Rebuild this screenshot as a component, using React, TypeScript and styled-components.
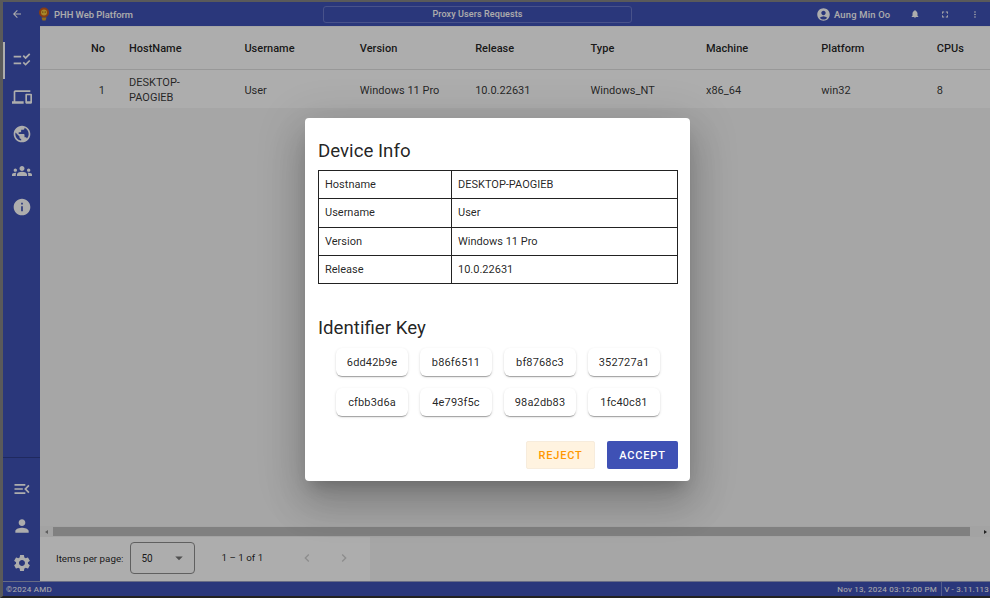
import styled, { createGlobalStyle } from "styled-components";
import {
  MdAccountCircle,
  MdArrowBack,
  MdArrowDropDown,
  MdChecklistRtl,
  MdChevronLeft,
  MdChevronRight,
  MdFullscreen,
  MdGroups,
  MdInfo,
  MdMenuOpen,
  MdMoreVert,
  MdNotifications,
  MdOutlineDevices,
  MdPerson,
  MdPublic,
  MdSettings,
} from "react-icons/md";

const GlobalStyle = createGlobalStyle`
  html, body {
    margin: 0;
    padding: 0;
    background: #fff;
  }
  * {
    box-sizing: border-box;
  }
  body {
    font-family: Roboto, "Liberation Sans", sans-serif;
  }
`;

const Frame = styled.div`
  position: relative;
  width: 990px;
  height: 598px;
  overflow: hidden;
  display: flex;
  flex-direction: column;
  background: #fff;
  border-top: 2px solid #5a5a5a;
  border-bottom: 2px solid #222;
  border-left: 3px solid #5a5a5a;
`;

const Header = styled.header`
  height: 24px;
  flex: none;
  background: #3f51b5;
  color: #fff;
  display: grid;
  grid-template-columns: 320px 309px 1fr;
  align-items: center;
`;

const HeaderLeft = styled.div`
  display: flex;
  align-items: center;
  font-size: 9.4px;
  font-weight: 500;

  svg {
    flex: none;
  }
`;

const BackIcon = styled(MdArrowBack)`
  font-size: 12px;
  margin: 0 15px 0 8px;
`;

const Logo = styled.svg`
  width: 12px;
  height: 14px;
  margin-right: 4px;
`;

const TitleBox = styled.div`
  height: 17px;
  border: 1px solid #6a79cc;
  border-radius: 3px;
  display: flex;
  align-items: center;
  justify-content: center;
  font-size: 9px;
  font-weight: 500;
  letter-spacing: 0.1px;
`;

const HeaderRight = styled.div`
  display: flex;
  align-items: center;
  justify-content: flex-end;
  font-weight: 500;
`;

const UserName = styled.span`
  margin: 0 20px 0 3px;
  width: 56px;
  white-space: nowrap;
  font-size: 9.4px;
  letter-spacing: 0.2px;
`;

const HeaderButton = styled.span`
  width: 10px;
  display: flex;
  justify-content: center;
  font-size: 14px;
  margin-right: 20px;

  &:last-child {
    margin-right: 10px;
  }
`;

const Body = styled.div`
  flex: 1;
  min-height: 0;
  display: flex;
`;

const Sidebar = styled.nav`
  width: 37px;
  flex: none;
  background: #3f51b5;
  display: flex;
  flex-direction: column;
  padding-top: 16px;
`;

const NavGroup = styled.div`
  display: flex;
  flex-direction: column;
`;

const BottomGroup = styled(NavGroup)`
  margin-top: auto;
  border-top: 1px solid #2f3d8c;
  padding-top: 13px;
`;

const NavItem = styled.div<{ $active?: boolean }>`
  height: 36.75px;
  display: flex;
  align-items: center;
  justify-content: center;
  color: #fff;
  font-size: 20px;
  border-left: 2px solid ${(p) => (p.$active ? "#fff" : "transparent")};
  padding-right: 2px;
`;

const Main = styled.main`
  flex: 1;
  min-width: 0;
  display: flex;
  flex-direction: column;
  background: #f5f5f5;
`;

const TableArea = styled.div`
  flex: 1;
  min-height: 0;
  padding-top: 1px;
`;

const Row = styled.div<{ $head?: boolean }>`
  display: grid;
  grid-template-columns: 65px repeat(8, 115.4px);
  align-items: center;
  height: ${(p) => (p.$head ? "43px" : "38px")};
  padding-top: ${(p) => (p.$head ? "0" : "2px")};
  background: #fff;
  border-bottom: ${(p) => (p.$head ? "1px solid #e0e0e0" : "none")};
  color: rgba(0, 0, 0, ${(p) => (p.$head ? 0.87 : 0.8)});
  font-size: 11px;
  font-weight: ${(p) => (p.$head ? 500 : 400)};
  line-height: 15px;
`;

const NumberCell = styled.div`
  text-align: right;
`;

const Cell = styled.div`
  padding-left: 24px;
  white-space: nowrap;
`;

const WrapCell = styled(Cell)`
  white-space: normal;
  padding-right: 30px;
`;

const Scrollbar = styled.div`
  height: 11px;
  flex: none;
  background: #f1f1f1;
  display: flex;
  align-items: center;
  justify-content: space-between;
  padding: 0 3px 0 5px;
`;

const ScrollThumb = styled.div`
  flex: 1;
  height: 9px;
  background: #bdbdbd;
  margin: 0 14px 0 5px;
`;

const ScrollArrow = styled.span<{ $right?: boolean }>`
  width: 0;
  height: 0;
  border-top: 2.5px solid transparent;
  border-bottom: 2.5px solid transparent;
  border-${(p) => (p.$right ? "left" : "right")}: 3px solid ${(p) => (p.$right ? "#333" : "#8a8a8a")};
`;

const Paginator = styled.div`
  height: 44px;
  flex: none;
  width: 330px;
  background: #fff;
  display: flex;
  align-items: center;
  padding: 0 0 2px 16px;
  color: rgba(0, 0, 0, 0.87);
  font-size: 9.8px;
`;

const PageSize = styled.div`
  width: 65px;
  height: 32px;
  border: 1px solid #8e8e8e;
  border-radius: 4px;
  margin-left: 6px;
  display: flex;
  align-items: center;
  justify-content: space-between;
  padding: 0 6px 0 11px;
  font-size: 10px;

  svg {
    font-size: 18px;
    color: #757575;
  }
`;

const RangeLabel = styled.span`
  margin-left: 27px;
  font-size: 9.8px;
  margin-bottom: 2px;
`;

const PageButton = styled.span`
  display: flex;
  color: #cfcfcf;
  font-size: 16px;
  margin-left: 21px;
`;

const FirstPageButton = styled(PageButton)`
  margin-left: 36px;
`;

const Footer = styled.footer`
  height: 15px;
  flex: none;
  background: #3f51b5;
  border-top: 1px solid #9aa0c4;
  color: #fff;
  display: flex;
  align-items: center;
  justify-content: space-between;
  font-size: 8px;
  letter-spacing: 0.27px;
  padding: 0 1px 0 3px;
`;

const FooterRight = styled.div`
  display: flex;
  align-self: stretch;
  align-items: center;
`;

const Version = styled.span`
  border-left: 1px solid #7c8ad0;
  margin-left: 4px;
  padding-left: 2px;
  align-self: stretch;
  display: flex;
  align-items: center;
  letter-spacing: 0.2px;
`;

const Backdrop = styled.div`
  position: absolute;
  inset: 0;
  background: rgba(0, 0, 0, 0.32);
  display: flex;
  align-items: flex-start;
  justify-content: flex-start;
  padding: 116px 0 0 302px;
`;

const Dialog = styled.div`
  width: 385px;
  height: 363px;
  background: #fff;
  border-radius: 4px;
  box-shadow: 0 11px 15px -7px rgba(0, 0, 0, 0.2), 0 24px 38px 3px rgba(0, 0, 0, 0.14),
    0 9px 46px 8px rgba(0, 0, 0, 0.12);
  padding: 21px 12px 12px 13px;
  display: flex;
  flex-direction: column;
  color: rgba(0, 0, 0, 0.87);
`;

const SectionTitle = styled.h2`
  margin: 0;
  font-size: 18.7px;
  font-weight: 400;
  line-height: 24px;
`;

const InfoTable = styled.table`
  width: 360px;
  margin-top: 7px;
  border-collapse: collapse;
  font-size: 11px;
  table-layout: fixed;

  td {
    border: 1px solid #222;
    height: 28.3px;
    padding: 0 6px;
  }

  td:first-child {
    width: 133px;
  }
`;

const KeyTitle = styled(SectionTitle)`
  margin-top: 32px;
`;

const KeyGrid = styled.div`
  display: grid;
  grid-template-columns: repeat(4, 72px);
  justify-content: center;
  column-gap: 12px;
  row-gap: 12px;
  margin-top: 8px;
`;

const KeyChip = styled.div`
  height: 28px;
  background: #fff;
  border-radius: 6px;
  box-shadow: 0 2px 1px -1px rgba(0, 0, 0, 0.2), 0 1px 1px rgba(0, 0, 0, 0.14), 0 1px 3px rgba(0, 0, 0, 0.12);
  display: flex;
  align-items: center;
  justify-content: center;
  font-size: 11px;
  letter-spacing: 0.15px;
`;

const Actions = styled.div`
  margin-top: auto;
  display: flex;
  justify-content: flex-end;
  gap: 12px;
`;

const ActionButton = styled.button<{ $primary?: boolean }>`
  height: 28px;
  width: ${(p) => (p.$primary ? "71px" : "69px")};
  border: ${(p) => (p.$primary ? "none" : "1px solid #f7ecdc")};
  border-radius: 2px;
  background: ${(p) => (p.$primary ? "#3f51b5" : "#fff3e0")};
  color: ${(p) => (p.$primary ? "#fff" : "#ff9800")};
  font-family: inherit;
  font-size: 11px;
  font-weight: 500;
  letter-spacing: 0.8px;
  padding: 0;
`;

const HEAD = ["HostName", "Username", "Version", "Release", "Type", "Machine", "Platform", "CPUs"];
const VALUES = ["User", "Windows 11 Pro", "10.0.22631", "Windows_NT", "x86_64", "win32", "8"];

const DEVICE = [
  ["Hostname", "DESKTOP-PAOGIEB"],
  ["Username", "User"],
  ["Version", "Windows 11 Pro"],
  ["Release", "10.0.22631"],
];

const KEYS = ["6dd42b9e", "b86f6511", "bf8768c3", "352727a1", "cfbb3d6a", "4e793f5c", "98a2db83", "1fc40c81"];

export default function App() {
  return (
    <>
      <GlobalStyle />
      <Frame>
        <Header>
          <HeaderLeft>
            <BackIcon />
            <Logo viewBox="0 0 12 14">
              <circle cx="6" cy="5.5" r="5" fill="#c9591c" />
              <circle cx="6" cy="5.5" r="3" fill="#f5c63c" />
              <circle cx="4.8" cy="5" r="0.6" fill="#5a2a00" />
              <circle cx="7.2" cy="5" r="0.6" fill="#5a2a00" />
              <path d="M3.5 10.5h5l-1 3h-3z" fill="#d9a12a" />
            </Logo>
            PHH Web Platform
          </HeaderLeft>
          <TitleBox>Proxy Users Requests</TitleBox>
          <HeaderRight>
            <MdAccountCircle size={15} />
            <UserName>Aung Min Oo</UserName>
            <HeaderButton>
              <MdNotifications size={16} />
            </HeaderButton>
            <HeaderButton>
              <MdFullscreen size={15} />
            </HeaderButton>
            <HeaderButton>
              <MdMoreVert size={15} />
            </HeaderButton>
          </HeaderRight>
        </Header>
        <Body>
          <Sidebar>
            <NavGroup>
              <NavItem $active>
                <MdChecklistRtl />
              </NavItem>
              <NavItem>
                <MdOutlineDevices />
              </NavItem>
              <NavItem>
                <MdPublic />
              </NavItem>
              <NavItem>
                <MdGroups />
              </NavItem>
              <NavItem>
                <MdInfo />
              </NavItem>
            </NavGroup>
            <BottomGroup>
              <NavItem>
                <MdMenuOpen />
              </NavItem>
              <NavItem>
                <MdPerson />
              </NavItem>
              <NavItem>
                <MdSettings />
              </NavItem>
            </BottomGroup>
          </Sidebar>
          <Main>
            <TableArea>
              <Row $head>
                <NumberCell>No</NumberCell>
                {HEAD.map((h) => (
                  <Cell key={h}>{h}</Cell>
                ))}
              </Row>
              <Row>
                <NumberCell>1</NumberCell>
                <WrapCell>DESKTOP-PAOGIEB</WrapCell>
                {VALUES.map((v) => (
                  <Cell key={v}>{v}</Cell>
                ))}
              </Row>
            </TableArea>
            <Scrollbar>
              <ScrollArrow />
              <ScrollThumb />
              <ScrollArrow $right />
            </Scrollbar>
            <Paginator>
              Items per page:
              <PageSize>
                50
                <MdArrowDropDown />
              </PageSize>
              <RangeLabel>1 – 1 of 1</RangeLabel>
              <FirstPageButton>
                <MdChevronLeft />
              </FirstPageButton>
              <PageButton>
                <MdChevronRight />
              </PageButton>
            </Paginator>
          </Main>
        </Body>
        <Footer>
          <span>©2024 AMD</span>
          <FooterRight>
            <span>Nov 13, 2024 03:12:00 PM</span>
            <Version>V - 3.11.113</Version>
          </FooterRight>
        </Footer>
        <Backdrop>
          <Dialog>
            <SectionTitle>Device Info</SectionTitle>
            <InfoTable>
              <tbody>
                {DEVICE.map(([k, v]) => (
                  <tr key={k}>
                    <td>{k}</td>
                    <td>{v}</td>
                  </tr>
                ))}
              </tbody>
            </InfoTable>
            <KeyTitle>Identifier Key</KeyTitle>
            <KeyGrid>
              {KEYS.map((k) => (
                <KeyChip key={k}>{k}</KeyChip>
              ))}
            </KeyGrid>
            <Actions>
              <ActionButton>REJECT</ActionButton>
              <ActionButton $primary>ACCEPT</ActionButton>
            </Actions>
          </Dialog>
        </Backdrop>
      </Frame>
    </>
  );
}
